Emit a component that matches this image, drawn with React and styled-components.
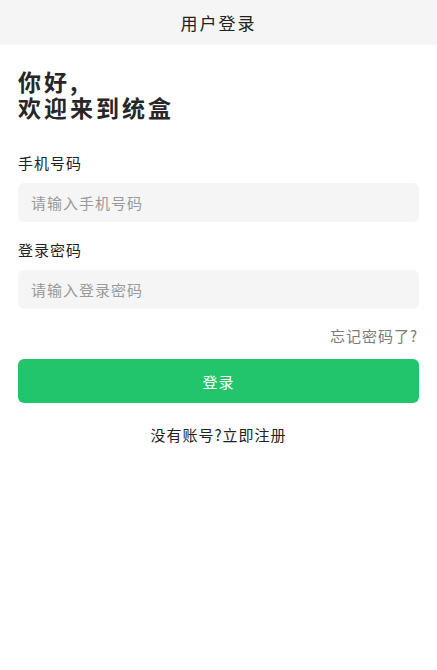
import React from 'react';
import styled, { createGlobalStyle } from 'styled-components';

const GlobalStyle = createGlobalStyle`
  html, body {
    margin: 0;
    padding: 0;
    background: #ffffff;
  }
  body {
    font-family: "Noto Sans CJK SC", "Noto Sans", sans-serif;
    color: #222;
  }
  * { box-sizing: border-box; }
`;

const Page = styled.div`
  width: 100%;
  min-height: 670px;
  background: #fff;
`;

const NavBar = styled.header`
  height: 45px;
  background: #f5f5f5;
  display: flex;
  align-items: center;
  justify-content: center;
  font-size: 17px;
  letter-spacing: 2px;
  color: #222;
`;

const Content = styled.main`
  padding: 0 18px;
  display: flex;
  flex-direction: column;
`;

const Greeting = styled.h1`
  margin: 23px 0 0;
  font-size: 23px;
  line-height: 26px;
  font-weight: 700;
  letter-spacing: 3px;
  color: #262626;
`;

const Label = styled.label`
  display: block;
  margin-top: ${p => p.$first ? '33px' : '18px'};
  font-size: 15px;
  line-height: 20px;
  letter-spacing: 1px;
  color: #222;
`;

const Input = styled.input`
  margin-top: 10px;
  width: 100%;
  height: 39px;
  border: none;
  outline: none;
  border-radius: 6px;
  background: #f5f5f5;
  padding: 0 13px;
  font-family: inherit;
  font-size: 15px;
  letter-spacing: 1px;
  color: #222;
  &::placeholder {
    color: #9a9a9a;
  }
`;

const Forgot = styled.a`
  align-self: flex-end;
  margin-top: 17px;
  margin-right: 1px;
  font-size: 15px;
  line-height: 20px;
  letter-spacing: 1px;
  color: #7a7a7a;
  text-decoration: none;
`;

const LoginButton = styled.button`
  margin-top: 13px;
  width: 100%;
  height: 44px;
  border: none;
  border-radius: 6px;
  background: #22c56b;
  color: #fff;
  font-family: inherit;
  font-size: 15px;
  letter-spacing: 1px;
  cursor: pointer;
`;

const Register = styled.div`
  margin-top: 22px;
  text-align: center;
  font-size: 15px;
  line-height: 20px;
  letter-spacing: 1px;
  color: #222;
`;

export default function App() {
  return (
    <Page>
      <GlobalStyle />
      <NavBar>用户登录</NavBar>
      <Content>
        <Greeting>
          你好,
          <br />
          欢迎来到统盒
        </Greeting>
        <Label $first>手机号码</Label>
        <Input type="tel" placeholder="请输入手机号码" />
        <Label>登录密码</Label>
        <Input type="password" placeholder="请输入登录密码" />
        <Forgot href="#">忘记密码了?</Forgot>
        <LoginButton>登录</LoginButton>
        <Register>没有账号?立即注册</Register>
      </Content>
    </Page>
  );
}
